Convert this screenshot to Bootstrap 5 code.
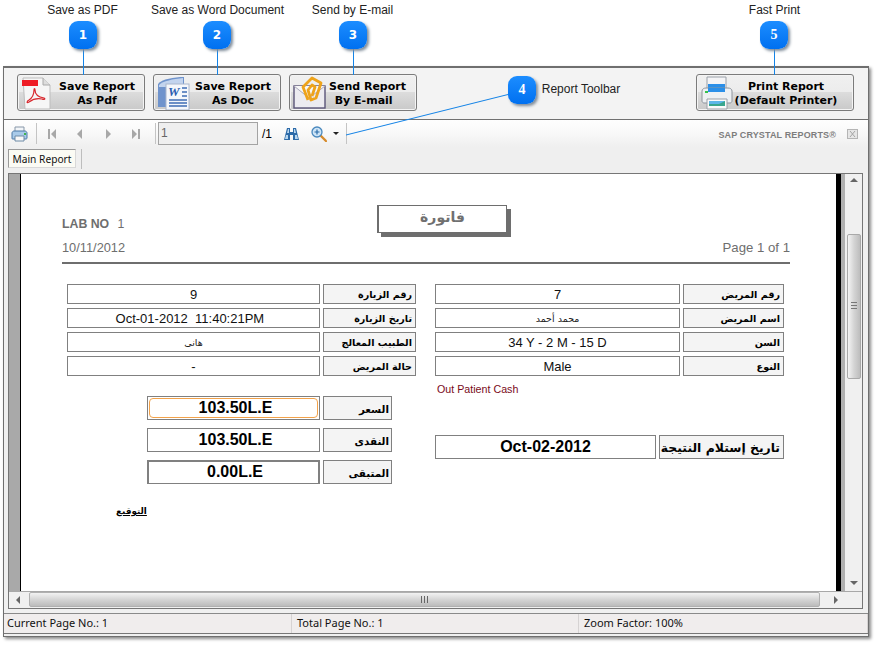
<!DOCTYPE html>
<html lang="en">
<head>
<meta charset="utf-8">
<title>Report viewer</title>
<link href="https://cdn.jsdelivr.net/npm/bootstrap@5.3.0/dist/css/bootstrap.min.css" rel="stylesheet">
<style>
html,body{margin:0;background:#fff;}
body{font-family:"Liberation Sans",Arial,sans-serif;font-size:12px;color:#000;}
.stage{position:relative;width:883px;height:649px;overflow:hidden;padding:66px 0 0 3px;}
.app-win{width:866px;height:571px;border:1px solid #6f6f6f;border-top-width:2px;box-shadow:2px 2px 3px #8a8a8a;background:#f0f0f0;}
.ribbon{height:52px;flex:none;background:#f3f3f3;border-bottom:1px solid #707070;padding:6px 14px 0 13px;gap:8px;}
.act-btn{width:128px;height:37px;padding:3px 0 0;border:1px solid #7b7b7b;border-radius:3px;background:linear-gradient(#f0f0f0 0,#ececec 48%,#dcdcdc 50%,#c9c9c9 100%);font-family:"DejaVu Sans",sans-serif;font-weight:700;font-size:11px;line-height:14px;color:#000;box-shadow:inset 0 0 0 1px #f4f4f4;}
.act-btn:hover{border-color:#7b7b7b;background:#e4e4e4;color:#000;}
.act-wide{width:158px;}
.act-ico{flex:none;width:36px;height:35px;margin:-3px 0 0 2px;}
.act-txt{flex:1;text-align:center;padding-right:6px;white-space:nowrap;}
.act-txt-mail{padding-right:7px;margin-left:-2px;}
.act-txt-print{padding-right:14px;margin-left:-2px;}
.crystal-bar{height:27px;flex:none;background:linear-gradient(#fefefe,#f9f9f9 45%,#efefef);padding-left:7px;position:relative;}
.tb-sep{width:1px;height:21px;background:#c4c4c4;flex:none;}
.tb-printer{width:17px;height:16px;}
.sep-a{margin-left:8px;}
.tb-nav{width:28.5px;text-align:center;line-height:0;}
.sep-b{margin-left:4px;}
.pg-input{width:100px;height:23px;margin-left:2px;border:1px solid #a3a3a3;background:#efefef;font-size:12px;line-height:20px;padding:0 2px;color:#666;}
.pg-total{margin-left:4px;width:14px;font-size:12px;}
.tb-bino{width:15px;height:14px;margin-left:8px;}
.tb-zoom{width:16px;height:16px;margin-left:12px;}
.tb-caret{margin-left:6px;width:0;height:0;border-left:3px solid transparent;border-right:3px solid transparent;border-top:3px solid #222;}
.sep-c{margin-left:7px;}
.sap-mark{margin-left:auto;margin-top:5px;font-weight:700;font-size:9px;color:#7d7d7d;letter-spacing:.14px;white-space:nowrap;}
.sap-close{width:11px;height:10px;margin:0 10px 0 11px;}
.tab-row{height:26px;flex:none;background:#efefef;padding:2px 0 0 4px;}
.rep-tab{width:68px;height:19px;background:#fbfbf4;border:1px solid #d8d8d8;border-left-color:#9a9a9a;border-top-color:#9a9a9a;font-family:"Noto Sans","DejaVu Sans",sans-serif;font-size:10.2px;line-height:18px;text-align:center;color:#111;white-space:nowrap;}
.tab-sep{width:1px;height:20px;background:#bdbdbd;margin-left:5px;}
.frame-wrap{flex:1;min-height:0;padding:0 5px 4px 4px;background:#f0f0f0;border-bottom:1px solid #8a8a8a;}
.rep-frame{height:100%;border:1px solid #767676;background:#f0f0f0;}
.strip-l{width:11px;flex:none;background:#a9a9a9;border-right:1px solid #000;box-sizing:content-box;}
.rep-page{width:815px;flex:none;background:#fff;padding:31px 46px 0 41px;overflow:hidden;}
.strip-r{width:9px;flex:none;background:linear-gradient(90deg,#000 5px,#b0b0b0 5px);}
.vbar{flex:1;position:relative;background:#f0f0f0;}
.vthumb{position:absolute;top:60px;left:2px;width:14px;height:145px;border:1px solid #a9a9a9;border-radius:2px;background:linear-gradient(90deg,#f4f4f4,#d4d4d4 50%,#bdbdbd);}
.vgrip{position:absolute;left:3px;top:67px;width:6px;height:7px;border-top:1px solid #777;border-bottom:1px solid #777;}
.vgrip::after{content:"";display:block;height:2px;margin-top:2px;border-top:1px solid #777;}
.arr-up,.arr-down{position:absolute;left:5px;width:0;height:0;border-left:4px solid transparent;border-right:4px solid transparent;}
.arr-up{top:4px;border-bottom:4px solid #666;}
.arr-down{bottom:6px;border-top:4px solid #666;}
.hbar{height:17px;flex:none;background:#f0f0f0;position:relative;border-top:1px solid #a8a8a8;}
.hthumb{position:absolute;left:20px;top:0;width:791px;height:15px;border:1px solid #b0b0b0;border-radius:2px;background:linear-gradient(#f2f2f2,#d5d5d5 50%,#bcbcbc);}
.hgrip{position:absolute;left:391px;top:3px;width:7px;height:7px;border-left:1px solid #666;border-right:1px solid #666;}
.hgrip::after{content:"";display:block;width:1px;height:7px;margin-left:2px;background:#666;}
.arr-left,.arr-right{position:absolute;top:4px;width:0;height:0;border-top:4px solid transparent;border-bottom:4px solid transparent;}
.arr-left{left:7px;border-right:4px solid #666;}
.arr-right{left:825px;border-left:4px solid #666;}
.status-row{height:20px;flex:none;background:#f0eded;font-family:"Noto Sans","DejaVu Sans",sans-serif;font-size:11px;line-height:18px;color:#111;padding-left:3px;margin-bottom:2px;border-bottom:1px solid #777;}
.stat-a{width:284px;white-space:nowrap;}
.stat-b{width:287px;white-space:nowrap;border-left:1px solid #d6d3d3;padding-left:5px;}
.stat-c{flex:1;white-space:nowrap;border-left:1px solid #d6d3d3;padding-left:5px;border-right:1px solid #d6d3d3;}
.rep-head{height:57px;position:relative;}
.lab-no{font-size:12.3px;color:#6e6e6e;line-height:14px;padding-top:12px;}
.lab-no b{margin-right:5px;}
.rep-date{font-size:12.8px;color:#6e6e6e;line-height:14px;margin-top:10px;}
.rep-pager{font-size:13.2px;color:#6e6e6e;line-height:14px;align-self:flex-end;padding-bottom:7px;}
.title-box{position:absolute;left:315px;top:0;width:130px;height:28px;border:1px solid #6e6e6e;border-left-width:2px;box-shadow:4px 4px 0 #6e6e6e;background:#fff;text-align:center;font-family:"DejaVu Sans",sans-serif;font-weight:700;font-size:14px;line-height:22px;color:#707070;}
.rep-rule{height:2px;background:#6e6e6e;width:728px;}
.rep-cols{padding:20px 0 0 5px;gap:19px;}
.rep-col{width:349px;flex:none;}
.fld-row{display:flex;gap:3px;height:20px;margin-bottom:4px;}
.fld-val,.fld-lab{border:1px solid #808080;height:100%;white-space:pre;}
.fld-val{flex:1;text-align:center;line-height:19px;font-size:13px;color:#111;}
.fld-lab{background:#f4f4f4;text-align:right;padding-right:3px;font-family:"DejaVu Sans",sans-serif;font-weight:700;font-size:9.6px;line-height:19px;color:#000;}
.lab-l{width:93px;flex:none;}
.lab-r{width:101px;flex:none;}
.fld-val.ar-val{font-family:"DejaVu Sans",sans-serif;font-size:9.5px;color:#222;}
.out-pt{font-size:10.7px;line-height:13px;color:#7a0a1a;padding:3px 0 0 2px;height:48px;}
.sum-wrap{padding:16px 24px 0 80px;}
.sum-row{display:flex;gap:3px;height:24px;margin-bottom:8px;}
.sum-row .fld-val{font-weight:700;font-size:16px;line-height:22px;color:#000;padding-left:4px;}
.sum-row .fld-lab{width:69px;flex:none;font-size:10.3px;line-height:24px;padding-right:2px;}
.val-focus{position:relative;}
.val-focus::after{content:"";position:absolute;inset:1px;border:1px solid #f2a24a;border-radius:4px;}
.sum-row .val-thick{border-width:2px 2px 1px 2px;line-height:20px;padding-left:3px;}
.sign-txt{font-family:"DejaVu Sans",sans-serif;font-weight:700;font-size:8.8px;text-decoration:underline;margin:21px 0 0 -31px;width:31px;text-align:center;white-space:nowrap;}
.sign-wrap{padding-left:80px;}
.date-row{display:flex;gap:3px;height:24px;margin-top:7px;}
.date-row .fld-val{font-weight:700;font-size:16px;line-height:22px;color:#000;}
.date-row .fld-lab{width:125px;flex:none;font-size:12.4px;line-height:24px;}
.note-lbl{position:absolute;white-space:nowrap;font-size:12px;line-height:14px;color:#222;transform:translateX(-50%);}
.nl-1{left:82.5px;top:3px;}
.nl-2{left:217.5px;top:3px;}
.nl-3{left:352.5px;top:3px;}
.nl-4{left:581px;top:82px;}
.nl-5{left:774.5px;top:3px;}
.note-svg{position:absolute;left:0;top:0;width:883px;height:649px;pointer-events:none;}
.bubble{position:absolute;width:28px;height:28px;border-radius:9px;background:linear-gradient(#1c8dff,#0070f0);box-shadow:2px 2px 3px #7f8c99;color:#fff;font-weight:700;font-size:12px;line-height:28px;text-align:center;font-family:"DejaVu Sans",sans-serif;}
.bb-1{left:69px;top:21px;}
.bb-2{left:203px;top:21px;}
.bb-3{left:339px;top:21px;}
.bb-4{left:508px;top:76px;font-family:"Liberation Serif",serif;font-size:14px;}
.bb-5{left:760px;top:21px;font-family:"Liberation Serif",serif;font-size:14px;}
</style>
</head>
<body>
<div class="stage">
  <div class="app-win d-flex flex-column">
    <div class="ribbon d-flex align-items-start">
      <button class="btn act-btn d-flex align-items-center" type="button">
        <svg class="act-ico" viewBox="0 0 36 35"><path d="M3 3h20l7 7v24H5z" fill="#f6f6f6" stroke="#bdbdbd"/><path d="M23 3v7h7" fill="#ddd" stroke="#aaa"/><rect x="2" y="5" width="16" height="6" fill="#ee1c25"/><path d="M9 25c3-2 5-6 5-10 0-2 1-2 1 0 0 4 3 7 9 8 2 1 0 2-2 1-5-1-9 0-13 3-3 2-2-1 0-2z" fill="none" stroke="#d8262c" stroke-width="1.2"/></svg>
        <span class="act-txt">Save Report<br>As Pdf</span>
      </button>
      <button class="btn act-btn d-flex align-items-center" type="button">
        <svg class="act-ico" viewBox="0 0 36 35"><path d="M2 9C6 4 18 2 28 2v30H2z" fill="#6f93cc"/><path d="M3 10c4-4 14-6 24-7v9H3z" fill="#c3d4ee"/><rect x="10" y="9" width="23" height="26" fill="#f5f7fb" stroke="#aab6cc"/><text x="12" y="21" font-family="Liberation Serif,serif" font-weight="700" font-style="italic" font-size="13" fill="#2a5db0">W</text><path d="M26 13h5M26 17h5M26 21h5M13 25h18M13 28h18M13 31h18" stroke="#3f6db5" stroke-width="1.4"/></svg>
        <span class="act-txt">Save Report<br>As Doc</span>
      </button>
      <button class="btn act-btn d-flex align-items-center" type="button">
        <svg class="act-ico" viewBox="0 0 36 35"><rect x="2" y="11" width="31" height="22" fill="#ecebf0" stroke="#5b5578" stroke-width="1.4"/><path d="M2 11l15 12 16-12" fill="#f7f7f7" stroke="#aaa8bb"/><path d="M16 25l-5-13 9-9 9 5-5 15-5 2-3-10 4-5 3 2-3 9" fill="none" stroke="#eea31a" stroke-width="2.8" stroke-linejoin="round"/></svg>
        <span class="act-txt act-txt-mail">Send Report<br>By E-mail&nbsp;&nbsp;</span>
      </button>
      <button class="btn act-btn act-wide ms-auto d-flex align-items-center" type="button">
        <svg class="act-ico" viewBox="0 0 36 35"><path d="M8 2h19v12H8z" fill="#f4f4f6" stroke="#9aa0a8"/><path d="M9 9h17v7H9z" fill="#2b8fe8"/><path d="M3 16c0-2 2-3 4-3h22c2 0 4 1 4 3v10c0 1-1 2-2 2H5c-1 0-2-1-2-2z" fill="#eef0f3" stroke="#8d949c"/><path d="M9 13h17v4H9z" fill="#2b8fe8"/><rect x="6" y="16" width="3" height="2" fill="#37c24a"/><path d="M8 24h20v10H8z" fill="#fafafa" stroke="#9aa0a8"/><path d="M10 26h16v5H10z" fill="#3aa68d"/><path d="M10 26h16l-6 3H10z" fill="#5db6e8"/></svg>
        <span class="act-txt act-txt-print">Print Report<br>(Default Printer)</span>
      </button>
    </div>

    <div class="crystal-bar d-flex align-items-center">
      <svg class="tb-printer" viewBox="0 0 17 16"><path d="M4 1h9v5H4z" fill="#f2f5f8" stroke="#8797a8"/><path d="M1 7c0-1 1-2 2-2h11c1 0 2 1 2 2v5c0 1-1 1-1 1H2c-1 0-1 0-1-1z" fill="#a9cbea" stroke="#4a78a6"/><path d="M4 10h9v5H4z" fill="#f8f8f8" stroke="#6d8aa6"/><rect x="13" y="7" width="2" height="2" fill="#3fb34f"/></svg>
      <span class="tb-sep sep-a"></span>
      <span class="tb-nav"><svg width="9" height="10" viewBox="0 0 9 10"><path d="M1 0h2v10H1zM9 0v10L4 5z" fill="#a8a8a8"/></svg></span>
      <span class="tb-nav"><svg width="7" height="10" viewBox="0 0 7 10"><path d="M6 0v10L1 5z" fill="#a8a8a8"/></svg></span>
      <span class="tb-nav"><svg width="7" height="10" viewBox="0 0 7 10"><path d="M1 0v10l5-5z" fill="#a8a8a8"/></svg></span>
      <span class="tb-nav"><svg width="9" height="10" viewBox="0 0 9 10"><path d="M0 0v10l5-5zM6 0h2v10H6z" fill="#a8a8a8"/></svg></span>
      <span class="tb-sep sep-b"></span>
      <div class="pg-input">1</div>
      <span class="pg-total">/1</span>
      <svg class="tb-bino" viewBox="0 0 15 14"><path d="M3 1h3v4h3V1h3l3 12H9V8H6v5H0z" fill="#2c6aa8"/><path d="M4 2h1v4H3zM10 2h1l1 4h-2zM2 8h2v4H1zM11 8h2l1 4h-3z" fill="#b7d6ef"/></svg>
      <svg class="tb-zoom" viewBox="0 0 16 16"><path d="M9 9l6 6" stroke="#d68a2a" stroke-width="2.4" stroke-linecap="round"/><circle cx="6" cy="6" r="5" fill="#cfe5f7" stroke="#4a88bd" stroke-width="1.3"/><path d="M3.5 6h5M6 3.5v5" stroke="#2a6ca8" stroke-width="1.2"/></svg>
      <span class="tb-caret"></span>
      <span class="tb-sep sep-c"></span>
      <span class="sap-mark">SAP CRYSTAL REPORTS®</span>
      <svg class="sap-close" viewBox="0 0 11 10"><rect x=".5" y=".5" width="10" height="9" fill="#e6e6e6" stroke="#b5b5b5"/><path d="M3 2l5 6M8 2L3 8" stroke="#a5a5a5"/></svg>
    </div>

    <div class="tab-row d-flex align-items-start">
      <div class="rep-tab">Main Report</div>
      <span class="tab-sep"></span>
    </div>

    <div class="frame-wrap">
      <div class="rep-frame d-flex flex-column">
        <div class="d-flex flex-grow-1" style="min-height:0">
          <div class="strip-l"></div>
          <div class="rep-page">
            <div class="rep-head d-flex justify-content-between">
              <div>
                <div class="lab-no"><b>LAB NO</b> 1</div>
                <div class="rep-date">10/11/2012</div>
              </div>
              <div class="title-box" dir="rtl" lang="ar">فاتورة</div>
              <div class="rep-pager">Page 1 of 1</div>
            </div>
            <div class="rep-rule"></div>
            <div class="rep-cols d-flex">
              <div class="rep-col">
                <div class="fld-row"><div class="fld-val">9</div><div class="fld-lab lab-l" dir="rtl">رقم الزيارة</div></div>
                <div class="fld-row"><div class="fld-val">Oct-01-2012  11:40:21PM  </div><div class="fld-lab lab-l" dir="rtl">تاريخ الزيارة</div></div>
                <div class="fld-row"><div class="fld-val ar-val" dir="rtl">هانى</div><div class="fld-lab lab-l" dir="rtl">الطبيب المعالج</div></div>
                <div class="fld-row"><div class="fld-val">-</div><div class="fld-lab lab-l" dir="rtl">حالة المريض</div></div>
                <div class="sum-wrap">
                  <div class="sum-row"><div class="fld-val val-focus">103.50L.E</div><div class="fld-lab" dir="rtl">السعر</div></div>
                  <div class="sum-row"><div class="fld-val">103.50L.E</div><div class="fld-lab" dir="rtl">النقدى</div></div>
                  <div class="sum-row"><div class="fld-val val-thick">0.00L.E</div><div class="fld-lab" dir="rtl">المتبقى</div></div>
                </div>
                <div class="sign-wrap"><div class="sign-txt" dir="rtl">التوقيع</div></div>
              </div>
              <div class="rep-col">
                <div class="fld-row"><div class="fld-val">7</div><div class="fld-lab lab-r" dir="rtl">رقم المريض</div></div>
                <div class="fld-row"><div class="fld-val ar-val" dir="rtl">محمد أحمد</div><div class="fld-lab lab-r" dir="rtl">اسم المريض</div></div>
                <div class="fld-row"><div class="fld-val">34 Y - 2 M - 15 D</div><div class="fld-lab lab-r" dir="rtl">السن</div></div>
                <div class="fld-row"><div class="fld-val">Male</div><div class="fld-lab lab-r" dir="rtl">النوع</div></div>
                <div class="out-pt">Out Patient Cash</div>
                <div class="date-row"><div class="fld-val">Oct-02-2012</div><div class="fld-lab" dir="rtl">تاريخ إستلام النتيجة</div></div>
              </div>
            </div>
          </div>
          <div class="strip-r"></div>
          <div class="vbar"><span class="arr-up"></span><div class="vthumb"><span class="vgrip"></span></div><span class="arr-down"></span></div>
        </div>
        <div class="hbar"><span class="arr-left"></span><div class="hthumb"><span class="hgrip"></span></div><span class="arr-right"></span></div>
      </div>
    </div>

    <div class="status-row d-flex">
      <div class="stat-a">Current Page No.: 1</div>
      <div class="stat-b">Total Page No.: 1</div>
      <div class="stat-c">Zoom Factor: 100%</div>
    </div>
  </div>

  <svg class="note-svg" viewBox="0 0 883 649">
    <g stroke="#1483e6" stroke-width="1" fill="none">
      <path d="M83.5 49V75M217.5 49V75M353.5 49V75M774.5 49V75"/>
      <path d="M510 94L346 135"/>
    </g>
  </svg>
  <span class="note-lbl nl-1">Save as PDF</span>
  <span class="note-lbl nl-2">Save as Word Document</span>
  <span class="note-lbl nl-3">Send by E-mail</span>
  <span class="note-lbl nl-4">Report Toolbar</span>
  <span class="note-lbl nl-5">Fast Print</span>
  <div class="bubble bb-1">1</div>
  <div class="bubble bb-2">2</div>
  <div class="bubble bb-3">3</div>
  <div class="bubble bb-4">4</div>
  <div class="bubble bb-5">5</div>
</div>
<script src="https://cdn.jsdelivr.net/npm/bootstrap@5.3.0/dist/js/bootstrap.bundle.min.js"></script>
</body>
</html>
